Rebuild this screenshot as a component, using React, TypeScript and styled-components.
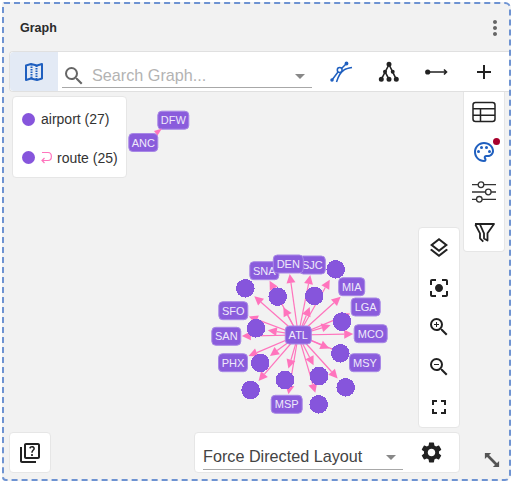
import React from "react";
import styled, { createGlobalStyle } from "styled-components";
import {
  MdAdd,
  MdArrowDropDown,
  MdCenterFocusStrong,
  MdFullscreen,
  MdMoreVert,
  MdOutlineLayers,
  MdOutlinePalette,
  MdOutlineQuiz,
  MdSearch,
  MdSettings,
  MdZoomIn,
  MdZoomOut,
} from "react-icons/md";

const BLUE = "#1f5fbf";
const DARK = "#222";
const PURPLE = "#8655dc";
const PINK = "#ff74bd";

const GlobalStyle = createGlobalStyle`
  html, body {
    margin: 0;
    background: #fff;
    font-family: "Liberation Sans", Arial, sans-serif;
  }
`;

const Frame = styled.div`
  box-sizing: border-box;
  width: 509px;
  height: 479px;
  margin: 2px 0 0 2px;
  display: flex;
  flex-direction: column;
  background: #f2f2f2;
  border: 2px dashed #6e93d2;
  border-radius: 2px 6px 6px 4px;
`;

const Header = styled.div`
  flex: 0 0 47px;
  display: flex;
  align-items: center;
  justify-content: space-between;
  padding: 0 2px 0 16px;
`;

const Title = styled.div`
  font-size: 12.5px;
  font-weight: bold;
  color: #2b2b2b;
`;

const Toolbar = styled.div`
  flex: 0 0 41px;
  box-sizing: border-box;
  margin-left: 5px;
  display: flex;
  align-items: stretch;
  background: #fff;
  border: 1px solid #e0e0e0;
  border-right: 0;
  border-radius: 4px 0 0 4px;
`;

const ViewButton = styled.div`
  width: 48px;
  display: flex;
  align-items: center;
  justify-content: center;
  background: #e3eaf5;
  border-radius: 4px 0 0 4px;
`;

const SearchBox = styled.div`
  width: 250px;
  height: 35px;
  margin: 1px 4px 0;
  padding-top: 11px;
  box-sizing: border-box;
  display: flex;
  align-items: center;
  color: #666;
  border-bottom: 1px solid #a8a8a8;
`;

const Placeholder = styled.span`
  flex: 1;
  margin-left: 6px;
  font-size: 16.2px;
  color: #b3b3b3;
`;

const ToolButtons = styled.div`
  display: flex;
  align-items: center;
  padding-left: 2px;
`;

const ToolButton = styled.div`
  width: 47.5px;
  display: flex;
  align-items: center;
  justify-content: center;
  color: ${DARK};
`;

const Canvas = styled.div`
  position: relative;
  flex: 1;
`;

const GraphSvg = styled.svg`
  position: absolute;
  inset: 0;
  width: 100%;
  height: 100%;
`;

const Panel = styled.div`
  position: absolute;
  box-sizing: border-box;
  background: #fff;
  border: 1px solid #e6e6e6;
  border-radius: 4px;
`;

const Legend = styled(Panel)`
  left: 8px;
  top: 4px;
  width: 115px;
  height: 82px;
  display: flex;
  flex-direction: column;
  justify-content: space-around;
  padding: 3px 0 0 9px;
`;

const LegendRow = styled.div`
  display: flex;
  align-items: center;
  font-size: 14px;
  color: #333;
`;

const Dot = styled.span`
  width: 13px;
  height: 13px;
  border-radius: 50%;
  background: ${PURPLE};
  margin-right: 6px;
`;

const SideBar = styled(Panel)`
  right: 4px;
  top: 0;
  width: 42px;
  height: 160px;
  border-top: 0;
  border-radius: 0 0 4px 4px;
  display: flex;
  flex-direction: column;
  align-items: center;
`;

const SideButton = styled.div`
  position: relative;
  flex: 0 0 40px;
  display: flex;
  align-items: center;
  justify-content: center;
  color: ${DARK};
`;

const Badge = styled.span`
  position: absolute;
  top: 6px;
  right: -4px;
  width: 7px;
  height: 7px;
  border-radius: 50%;
  background: #a8002c;
`;

const ZoomBar = styled(Panel)`
  right: 49px;
  top: 135px;
  width: 42px;
  height: 201px;
  display: flex;
  flex-direction: column;
  align-items: center;
  justify-content: space-around;
  color: ${DARK};
`;

const LayoutBar = styled(Panel)`
  right: 49px;
  bottom: 6px;
  width: 266px;
  height: 41px;
  display: flex;
  align-items: center;
  padding-left: 8px;
`;

const LayoutSelect = styled.div`
  width: 200px;
  height: 28px;
  margin-top: 7px;
  padding-top: 2px;
  box-sizing: border-box;
  display: flex;
  align-items: center;
  justify-content: space-between;
  font-size: 16.2px;
  color: #444;
  border-bottom: 1px solid #a8a8a8;
`;

const GearButton = styled.div`
  flex: 1;
  display: flex;
  justify-content: center;
  color: ${DARK};
`;

const HelpButton = styled(Panel)`
  left: 5px;
  bottom: 6px;
  width: 42px;
  height: 41px;
  display: flex;
  align-items: center;
  justify-content: center;
  color: ${DARK};
`;

const ResizeHandle = styled.svg`
  position: absolute;
  right: 9px;
  bottom: 11px;
  width: 16px;
  height: 16px;
`;

type IconProps = { color?: string };

const MapIcon = () => (
  <svg width="24" height="24" viewBox="0 0 24 24" fill="none" stroke={BLUE}>
    <path strokeWidth="2" strokeLinejoin="round" d="M4 5.5 L9 4 L15 5.5 L20 4 V18.5 L15 20 L9 18.5 L4 20 Z" />
    <path strokeWidth="2" strokeDasharray="1.5 1" d="M9.5 4 V18.5 M14.5 5.5 V20" />
  </svg>
);

const NetworkIcon = () => (
  <svg width="24" height="24" viewBox="0 0 24 24" fill="none" stroke={BLUE} strokeWidth="1.5">
    <circle cx="9.7" cy="10" r="2.4" />
    <path d="M2 20 L8 12 M11.5 8.5 L16.5 3.5" />
    <path d="M6.5 22 C8 17 10 12.5 14 10 C16 8.5 19 8 22 7.5" />
    <circle cx="2" cy="20" r="1" fill={BLUE} />
    <circle cx="16.5" cy="3.5" r="1.2" fill={BLUE} />
  </svg>
);

const TreeIcon = () => (
  <svg width="24" height="24" viewBox="0 0 24 24" fill={DARK} stroke={DARK} strokeWidth="1.6">
    <path fill="none" d="M12 4.5 L4.3 19.3 M12 4.5 L19.3 19.3 M8 11.7 L12 19.3" />
    <circle cx="12" cy="4.3" r="1.7" />
    <circle cx="8" cy="11.7" r="1.2" />
    <circle cx="15.7" cy="11.7" r="1.2" />
    <circle cx="4.3" cy="19.3" r="1.7" />
    <circle cx="12" cy="19.3" r="1.7" />
    <circle cx="19.3" cy="19.3" r="1.7" />
  </svg>
);

const EdgeIcon = () => (
  <svg width="24" height="24" viewBox="0 0 24 24" fill={DARK} stroke={DARK}>
    <circle cx="2.7" cy="12" r="2.6" stroke="none" />
    <path fill="none" strokeWidth="1.6" d="M3 12 H21 M19 9.5 L21.5 12 L19 14.5" />
  </svg>
);

const TableIcon = () => (
  <svg width="24" height="24" viewBox="0 0 24 24" fill="none" stroke={DARK} strokeWidth="1.5">
    <rect x="1" y="2.5" width="22" height="19" rx="2.5" />
    <path d="M1 8.8 H23 M1 15.2 H23 M8.5 8.8 V21.5" />
  </svg>
);

const SlidersIcon = () => (
  <svg width="24" height="24" viewBox="0 0 24 24" fill="#fff" stroke="#333" strokeWidth="1.3">
    <path d="M0 4.7 H24 M0 12 H24 M0 19.3 H24" fill="none" />
    <circle cx="9" cy="4.7" r="2.8" />
    <circle cx="16.3" cy="12" r="2.8" />
    <circle cx="7.3" cy="19.3" r="2.8" />
  </svg>
);

const FilterIcon = () => (
  <svg width="24" height="24" viewBox="0 0 24 24" fill="none" stroke={DARK} strokeWidth="1.8" strokeLinejoin="round">
    <path d="M3 4 H22 L15.5 13.3 V20.5 L12 18.5 V13.3 L8 4.5" />
    <path d="M3.3 4.5 L8 13.3 V18.3 L11.3 21.7" />
  </svg>
);

const LoopIcon = ({ color = PINK }: IconProps) => (
  <svg width="12" height="13" viewBox="0 0 12 13" fill="none" stroke={color} strokeWidth="1.2" style={{ marginRight: 4 }}>
    <path d="M1 1.5 H7 C11.5 1.5 11.5 9.5 7 9.5 H1 M3.5 7 L1 9.5 L3.5 12" />
  </svg>
);

type GraphNode = { x: number; y: number; label?: string; w?: number };

const HUB = { x: 298.3, y: 335 };

const NODES: GraphNode[] = [
  { x: 335.7, y: 269.3 },
  { x: 314.3, y: 296 },
  { x: 277.7, y: 296.7 },
  { x: 245.3, y: 288.3 },
  { x: 256, y: 328.3 },
  { x: 342, y: 321.7 },
  { x: 340.3, y: 353.3 },
  { x: 260.3, y: 363 },
  { x: 285, y: 380 },
  { x: 319, y: 376 },
  { x: 345.7, y: 387.3 },
  { x: 250.7, y: 390 },
  { x: 318.7, y: 404.3 },
  { x: 312.3, y: 265, label: "SJC", w: 26 },
  { x: 264.3, y: 270.7, label: "SNA", w: 29 },
  { x: 288.3, y: 264, label: "DEN", w: 30 },
  { x: 351.7, y: 286.7, label: "MIA", w: 26 },
  { x: 365.7, y: 307, label: "LGA", w: 29 },
  { x: 370.7, y: 333.7, label: "MCO", w: 33 },
  { x: 365, y: 362.7, label: "MSY", w: 31 },
  { x: 286.7, y: 404.3, label: "MSP", w: 31 },
  { x: 233, y: 362.7, label: "PHX", w: 29 },
  { x: 226.3, y: 336.3, label: "SAN", w: 29 },
  { x: 233.3, y: 310.7, label: "SFO", w: 29 },
];

const LABEL_H = 18;

// distance from a node's centre to the point where the arrow stops
function stopDistance(n: GraphNode, ux: number, uy: number) {
  if (!n.label) return 12;
  const dx = Math.abs(ux) > 0.001 ? (n.w! / 2 + 1) / Math.abs(ux) : 999;
  const dy = Math.abs(uy) > 0.001 ? (LABEL_H / 2 + 1) / Math.abs(uy) : 999;
  return Math.min(dx, dy);
}

const Arrow = ({ from, to }: { from: { x: number; y: number }; to: GraphNode }) => {
  const len = Math.hypot(to.x - from.x, to.y - from.y);
  const ux = (to.x - from.x) / len;
  const uy = (to.y - from.y) / len;
  const stop = stopDistance(to, ux, uy);
  const tx = to.x - ux * stop;
  const ty = to.y - uy * stop;
  const bx = tx - ux * 9;
  const by = ty - uy * 9;
  return (
    <g>
      <line x1={from.x} y1={from.y} x2={bx} y2={by} stroke={PINK} strokeWidth="1.2" />
      <polygon
        fill={PINK}
        points={`${tx},${ty} ${bx - uy * 4.5},${by + ux * 4.5} ${bx + uy * 4.5},${by - ux * 4.5}`}
      />
    </g>
  );
};

const Label = ({ x, y, w, text }: { x: number; y: number; w: number; text: string }) => (
  <g>
    <rect
      x={x - w / 2}
      y={y - LABEL_H / 2}
      width={w}
      height={LABEL_H}
      rx="4"
      fill="#8a5cdc"
      stroke="#a888e6"
      strokeWidth="1"
    />
    <text x={x} y={y + 4} textAnchor="middle" fontSize="11" fill="#efe9fa" fontFamily="'Liberation Sans', Arial, sans-serif">
      {text}
    </text>
  </g>
);

const GraphDrawing = () => (
  <GraphSvg>
    <g transform="translate(-4,-92)">
      <Label x={143.3} y={142.5} w={29} text="ANC" />
      <Label x={173.3} y={120.2} w={31} text="DFW" />
      <polygon fill={PINK} points="154,131 162,128.5 157.5,135.5" />
      {NODES.map((n, i) => (
        <Arrow key={i} from={HUB} to={n} />
      ))}
      {NODES.map((n, i) =>
        n.label ? (
          <Label key={i} x={n.x} y={n.y} w={n.w!} text={n.label} />
        ) : (
          <circle key={i} cx={n.x} cy={n.y} r="9.3" fill={PURPLE} shapeRendering="crispEdges" />
        )
      )}
      <Label x={HUB.x} y={HUB.y} w={26} text="ATL" />
    </g>
  </GraphSvg>
);

export default function App() {
  return (
    <>
      <GlobalStyle />
      <Frame>
        <Header>
          <Title>Graph</Title>
          <MdMoreVert size={24} color="#666" />
        </Header>
        <Toolbar>
          <ViewButton>
            <MapIcon />
          </ViewButton>
          <SearchBox>
            <MdSearch size={24} />
            <Placeholder>Search Graph...</Placeholder>
            <MdArrowDropDown size={24} color="#888" />
          </SearchBox>
          <ToolButtons>
            <ToolButton>
              <NetworkIcon />
            </ToolButton>
            <ToolButton>
              <TreeIcon />
            </ToolButton>
            <ToolButton>
              <EdgeIcon />
            </ToolButton>
            <ToolButton>
              <MdAdd size={24} />
            </ToolButton>
          </ToolButtons>
        </Toolbar>
        <Canvas>
          <GraphDrawing />
          <Legend>
            <LegendRow>
              <Dot />
              airport (27)
            </LegendRow>
            <LegendRow>
              <Dot />
              <LoopIcon />
              route (25)
            </LegendRow>
          </Legend>
          <SideBar>
            <SideButton>
              <TableIcon />
            </SideButton>
            <SideButton>
              <MdOutlinePalette size={24} color={BLUE} />
              <Badge />
            </SideButton>
            <SideButton>
              <SlidersIcon />
            </SideButton>
            <SideButton>
              <FilterIcon />
            </SideButton>
          </SideBar>
          <ZoomBar>
            <MdOutlineLayers size={24} />
            <MdCenterFocusStrong size={24} />
            <MdZoomIn size={24} />
            <MdZoomOut size={24} />
            <MdFullscreen size={24} />
          </ZoomBar>
          <LayoutBar>
            <LayoutSelect>
              Force Directed Layout
              <MdArrowDropDown size={24} color="#888" />
            </LayoutSelect>
            <GearButton>
              <MdSettings size={25} />
            </GearButton>
          </LayoutBar>
          <HelpButton>
            <MdOutlineQuiz size={24} />
          </HelpButton>
          <ResizeHandle viewBox="0 0 18 18" fill="#555" stroke="#555">
            <path strokeWidth="3" d="M4 4 L14 14" />
            <path stroke="none" d="M1 1 H8 L1 8 Z M17 17 H10 L17 10 Z" />
          </ResizeHandle>
        </Canvas>
      </Frame>
    </>
  );
}
